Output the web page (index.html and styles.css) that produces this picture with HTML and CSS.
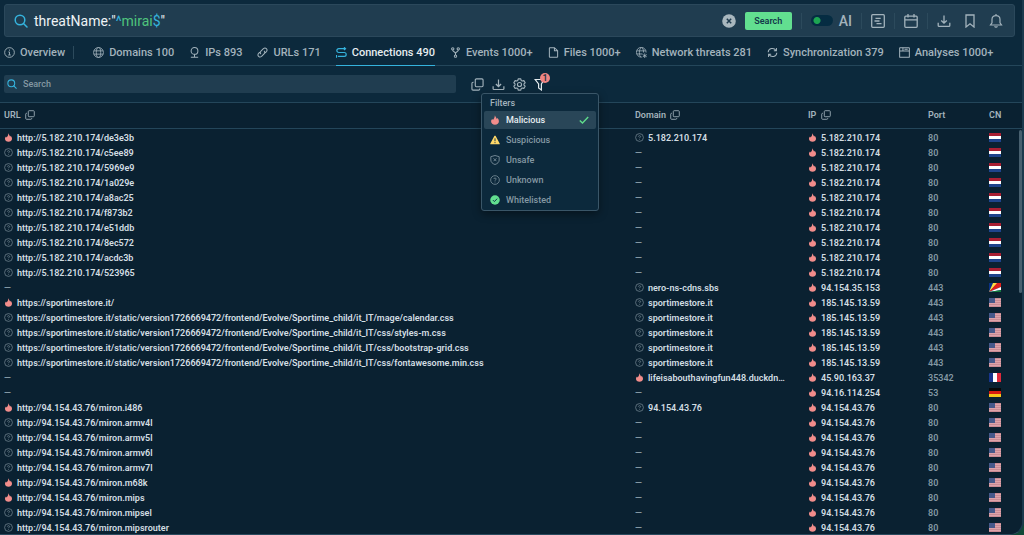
FILE: index.html
```html
<!DOCTYPE html>
<html lang="en">
    <head>
        <meta charset="UTF-8">
        <meta name="viewport" content="width=device-width, initial-scale=1.0">
        <title>Threat lookup</title>
        <link rel="stylesheet" href="styles.css">
    </head>
    <body>
        <!-- icons used more than once -->
        <svg class="sprite" aria-hidden="true">
            <symbol id="icSearch" viewBox="0 0 14 14">
                <circle cx="6" cy="6" r="4.8" fill="none" stroke="currentColor" stroke-width="1.5"/>
                <path d="M9.5 9.5 13 13" stroke="currentColor" stroke-width="1.5" stroke-linecap="round"/>
            </symbol>
            <symbol id="icCopy" viewBox="0 0 14 14">
                <rect x="4.6" y="1" width="8.4" height="8.4" rx="1.2" fill="none" stroke="currentColor" stroke-width="1.2"/>
                <path d="M2.8 4.6H2.2A1.2 1.2 0 0 0 1 5.8v6A1.2 1.2 0 0 0 2.2 13h6a1.2 1.2 0 0 0 1.2-1.2v-.6" fill="none" stroke="currentColor" stroke-width="1.2"/>
            </symbol>
            <symbol id="icDownload" viewBox="0 0 14 14">
                <path d="M7 1.500v7.500M4.200 6.500 7 9.200l2.800-2.700M1.200 8.800v2.700c0 .5.4.9.9.9h9.800c.5 0 .9-.4.9-.9V8.800" fill="none" stroke="currentColor" stroke-width="1.3"/>
            </symbol>
            <symbol id="icFire" viewBox="0 0 10 12">
                <path d="M4.9.4C5.3 2 6.6 3.200 7.100 4.900L8 3.700C9.100 5 9.700 6.200 9.700 7.600 9.700 10.100 7.600 11.700 5 11.700S.3 10.100.3 7.600C.3 6.300.9 5.400 1.700 4.700L2.600 6C3.900 4.600 4.600 2.800 4.900.4Z" fill="#f28d8b"/>
            </symbol>
            <symbol id="icUnknown" viewBox="0 0 12 12">
                <circle cx="6" cy="6" r="5.200" fill="none" stroke="currentColor" stroke-width=".9"/>
                <path d="M4.500 4.800C4.500 3.200 7.500 3.200 7.500 4.800 7.500 5.700 6 5.700 6 6.900M6 7.900v1" fill="none" stroke="currentColor" stroke-width=".9"/>
            </symbol>
            <symbol id="flNL" viewBox="0 0 12 9">
                <path d="M0 0h12v9H0z" fill="#fff"/><path d="M0 0h12v3H0z" fill="#a91f32"/><path d="M0 6h12v3H0z" fill="#1e448c"/>
            </symbol>
            <symbol id="flSC" viewBox="0 0 12 9">
                <path d="M0 0h12v9H0z" fill="#0a3186"/>
                <path d="M0 9 4 0h5z" fill="#fce045"/><path d="M0 9 8 0h4v4z" fill="#e0201c"/>
                <path d="M0 9l12-5v3z" fill="#fff"/><path d="M0 9l12-2v2z" fill="#117a3b"/>
            </symbol>
            <symbol id="flUS" viewBox="0 0 12 9">
                <path d="M0 0h12v9H0z" fill="#dca4ab"/>
                <path d="M0 .5h12M0 2.500h12M0 4.500h12M0 6.500h12M0 8.500h12" stroke="#c98b94"/>
                <path d="M0 0h6v5H0z" fill="#46598b"/>
            </symbol>
            <symbol id="flFR" viewBox="0 0 12 9">
                <path d="M0 0h12v9H0z" fill="#fff"/><path d="M0 0h4v9H0z" fill="#17358c"/><path d="M8 0h4v9H8z" fill="#df2a3c"/>
            </symbol>
            <symbol id="flDE" viewBox="0 0 12 9">
                <path d="M0 0h12v3H0z" fill="#080808"/><path d="M0 3h12v3H0z" fill="#d61a10"/><path d="M0 6h12v3H0z" fill="#f5c51b"/>
            </symbol>
        </svg>

        <main class="window">
            <form class="query-bar">
                <label for="query" class="query-icon" aria-label="Query"><svg class="icon-14"><use href="#icSearch"/></svg></label>
                <div class="query-field">
                    <input type="text" id="query" value='threatName:"^mirai$"' spellcheck="false">
                    <div class="query-colors" aria-hidden="true">threatName:"<span class="anchor">^</span><span class="term">mirai</span><span class="anchor">$</span>"</div>
                </div>
                <button type="reset" class="icon-button" aria-label="Clear">
                    <svg class="icon-14" viewBox="0 0 14 14"><circle cx="7" cy="7" r="6.800" fill="#a9b7be"/><path d="m4.800 4.800 4.400 4.400m0-4.400L4.800 9.200" stroke="#1f3b4e" stroke-width="1.500"/></svg>
                </button>
                <button type="button" class="search-button">Search</button>
                <span class="divider"></span>
                <div class="ai-switch">
                    <input type="checkbox" id="ai">
                    <label for="ai">AI</label>
                </div>
                <span class="divider"></span>
                <button type="button" class="icon-button" aria-label="Query guide">
                    <svg class="icon-14" viewBox="0 0 14 14" fill="none" stroke="currentColor" stroke-width="1.300"><rect x=".7" y=".7" width="12.600" height="12.600" rx="1"/><path d="M4.500 4.300h5.200M3.500 7h5M5.500 9.700h5"/></svg>
                </button>
                <span class="divider"></span>
                <button type="button" class="icon-button" aria-label="Period">
                    <svg class="icon-14" viewBox="0 0 14 14" fill="none" stroke="currentColor" stroke-width="1.300"><rect x=".8" y="2.200" width="12.400" height="11.100" rx="1"/><path d="M1 5.800h12M4 0v3.600M10 0v3.600"/></svg>
                </button>
                <span class="divider"></span>
                <div class="query-actions">
                    <button type="button" class="icon-button" aria-label="Export"><svg class="icon-14"><use href="#icDownload"/></svg></button>
                    <button type="button" class="icon-button" aria-label="Bookmark">
                        <svg class="icon-14" viewBox="0 0 14 14" fill="none" stroke="currentColor" stroke-width="1.300"><path d="M3 1h8v12L7 9.800 3 13z"/></svg>
                    </button>
                    <button type="button" class="icon-button" aria-label="Notifications">
                        <svg class="icon-14" viewBox="0 0 14 14" fill="none" stroke="currentColor" stroke-width="1.200"><path d="M1.500 11h11L11 8.800V5.500C11 3 9.500 1.600 7 1.600S3 3 3 5.500v3.300zM5.600 12.300c.6 1.200 2.200 1.200 2.800 0M7 0v1.500"/></svg>
                    </button>
                </div>
            </form>

            <nav class="tabs">
                <a href="#overview" class="tab">
                    <svg class="icon-11" viewBox="0 0 12 12" fill="none" stroke="currentColor"><circle cx="6" cy="6" r="5.300"/><path d="M6 2.800v1.200M4.800 5.400H6v3.200M4.600 8.700h2.800"/></svg>
                    Overview
                </a>
                <span class="divider"></span>
                <a href="#domains" class="tab">
                    <svg class="icon-11" viewBox="0 0 12 12" fill="none" stroke="currentColor" stroke-width=".9"><circle cx="6" cy="6" r="5.400"/><ellipse cx="6" cy="6" rx="2.400" ry="5.400"/><path d="M1 4.200h10M1 7.800h10"/></svg>
                    Domains 100
                </a>
                <a href="#ips" class="tab">
                    <svg class="icon-11" viewBox="0 0 12 12" fill="none" stroke="currentColor" stroke-width="1.100"><circle cx="6" cy="4.300" r="3.700"/><path d="M6 8v3M2 11.300h8"/></svg>
                    IPs 893
                </a>
                <a href="#urls" class="tab">
                    <svg class="icon-11" viewBox="0 0 12 12" fill="none" stroke="currentColor" stroke-width="1.100"><path d="M4.300 7.700C3 6.300 3.400 5.300 4.300 4.400L7 1.700C9.300-.2 12.200 2.600 10.300 5L8.800 6.500M7.700 4.300C9 5.700 8.600 6.700 7.700 7.600L5 10.300C2.700 12.200-.2 9.400 1.700 7L3.200 5.500"/></svg>
                    URLs 171
                </a>
                <a href="#connections" class="tab active">
                    <svg class="icon-11" viewBox="0 0 12 12" fill="none" stroke="#35b3dd" stroke-width="1.300"><path d="M10 1.800H3a2.100 2.100 0 0 0 0 4.200h6a2.100 2.100 0 0 1 0 4.200H2M8.700.3l1.700 1.500-1.700 1.500M.5 8.600v3.200"/></svg>
                    Connections 490
                </a>
                <a href="#events" class="tab">
                    <svg class="icon-11" viewBox="0 0 12 12" fill="none" stroke="currentColor" stroke-width="1.100"><circle cx="3" cy="2" r="1.300"/><circle cx="9" cy="2" r="1.300"/><circle cx="6" cy="10" r="1.300"/><path d="M3 3.300c0 2.200 3 1.500 3 4v1.400M9 3.300c0 2.200-3 1.500-3 4"/></svg>
                    Events 1000+
                </a>
                <a href="#files" class="tab">
                    <svg class="icon-11" viewBox="0 0 12 12" fill="none" stroke="currentColor" stroke-width="1.100"><path d="M7 .7H2.200c-.4 0-.7.300-.7.700v9.200c0 .4.300.7.700.7h7.600c.4 0 .7-.3.7-.7V4zM7 .7V4h3.500"/></svg>
                    Files 1000+
                </a>
                <a href="#threats" class="tab">
                    <svg class="icon-11" viewBox="0 0 12 12" fill="none" stroke="currentColor" stroke-width=".9"><path d="M11 6A5.300 5.300 0 1 0 6 11M3.700 6c0-7 4.600-7 4.600 0M3.700 6c0 2.500.6 5 2.300 5M1 4.200h9.600M1 7.600h6M9.500 7v5M7.300 8.300l4.400 2.400M11.700 8.300l-4.400 2.400"/></svg>
                    Network threats 281
                </a>
                <a href="#sync" class="tab">
                    <svg class="icon-11" viewBox="0 0 12 12" fill="none" stroke="currentColor" stroke-width="1.100"><path d="M1.300 5.800C1.500 1.300 7.500.2 9.800 3.800M10.300 1v3H7.500M10.700 6.200C10.500 10.700 4.500 11.800 2.200 8.200M1.700 11V8h2.800"/></svg>
                    Synchronization 379
                </a>
                <a href="#analyses" class="tab">
                    <svg class="icon-11" viewBox="0 0 12 12" fill="none" stroke="currentColor" stroke-width="1.100"><rect x=".7" y=".7" width="10.600" height="10.600" rx=".5"/><path d="M.7 4.300h10.600M4.300.7v3.600M6 2.500h3.500"/></svg>
                    Analyses 1000+
                </a>
            </nav>

            <div class="toolbar">
                <div class="table-search">
                    <label for="tableSearch" aria-label="Search in table"><svg class="icon-10"><use href="#icSearch"/></svg></label>
                    <input type="text" id="tableSearch" placeholder="Search">
                </div>
                <div class="tools">
                    <button type="button" class="icon-button" aria-label="Copy"><svg class="icon-13"><use href="#icCopy"/></svg></button>
                    <button type="button" class="icon-button" aria-label="Download"><svg class="icon-13"><use href="#icDownload"/></svg></button>
                    <button type="button" class="icon-button" aria-label="Settings">
                        <svg class="icon-13" viewBox="0 0 14 14" fill="none" stroke="currentColor" stroke-width="1.200"><path d="M5.600.9h2.800l.4 1.700 1.200.7 1.700-.5 1.400 2.400-1.300 1.200v1.200l1.300 1.200-1.400 2.400-1.700-.5-1.200.7-.4 1.700H5.600l-.4-1.700-1.200-.7-1.700.5L.9 8.800l1.300-1.200V6.400L.9 5.200l1.400-2.400 1.700.5 1.200-.7z" stroke-linejoin="round"/><circle cx="7" cy="7" r="2.200"/></svg>
                    </button>
                    <div class="filter">
                        <button type="button" class="icon-button filter-button" aria-label="Filters" aria-expanded="true">
                            <svg class="icon-13" viewBox="0 0 13 13" fill="none" stroke="currentColor" stroke-width="1.200"><path d="M1.200 1.500h9L7.400 6v6L4.600 10V6z"/></svg>
                            <span class="badge">1</span>
                        </button>
                        <div class="filter-menu">
                            <p class="filter-title">Filters</p>
                            <button type="button" class="filter-item selected">
                                <svg class="icon-10"><use href="#icFire"/></svg>
                                <span>Malicious</span>
                                <svg class="icon-10 check" viewBox="0 0 10 10"><path d="m.8 5.400 2.700 2.700 5.700-6" fill="none" stroke="#5fdc8c" stroke-width="1.400"/></svg>
                            </button>
                            <button type="button" class="filter-item">
                                <svg class="icon-10" viewBox="0 0 12 12"><path d="M6 .8c.4 0 .6.2.8.5l4.800 8.800c.3.6 0 1.100-.6 1.100H1c-.6 0-.9-.5-.6-1.100l4.800-8.800C5.400 1 5.600.8 6 .8Z" fill="#ffd868"/><path d="M6 4v3.500M6 8.500v1.300" stroke="#23394a" stroke-width="1.200"/></svg>
                                <span>Suspicious</span>
                            </button>
                            <button type="button" class="filter-item">
                                <svg class="icon-10" viewBox="0 0 12 12" fill="none" stroke="currentColor"><path d="M6 .6 11 2v4c0 2.600-2 4.400-5 5.400C3 10.400 1 8.600 1 6V2z"/><path d="m4.300 4 3.400 3.400m0-3.400L4.300 7.400"/></svg>
                                <span>Unsafe</span>
                            </button>
                            <button type="button" class="filter-item">
                                <svg class="icon-10"><use href="#icUnknown"/></svg>
                                <span>Unknown</span>
                            </button>
                            <button type="button" class="filter-item">
                                <svg class="icon-10" viewBox="0 0 12 12"><circle cx="6" cy="6" r="5.700" fill="#62df90"/><path d="m3.500 6.100 1.800 1.800 3.300-3.500" fill="none" stroke="#12384a" stroke-width="1.200"/></svg>
                                <span>Whitelisted</span>
                            </button>
                        </div>
                    </div>
                </div>
            </div>

            <div class="table-area">
                <table class="connections">
                    <colgroup>
                        <col>
                        <col class="col-domain">
                        <col class="col-ip">
                        <col class="col-port">
                        <col class="col-cn">
                    </colgroup>
                    <thead>
                        <tr>
                            <th>URL <svg class="icon-10"><use href="#icCopy"/></svg></th>
                            <th>Domain <svg class="icon-10"><use href="#icCopy"/></svg></th>
                            <th>IP <svg class="icon-10"><use href="#icCopy"/></svg></th>
                            <th>Port</th>
                            <th>CN</th>
                        </tr>
                    </thead>
                    <tbody id="rows"></tbody>
                </table>
                <div class="scroll-thumb"></div>
            </div>
        </main>
        <script src="script.js"></script>
    </body>
</html>
```

FILE: styles.css
```css
*{
    margin: 0;
    padding: 0;
    box-sizing: border-box;
}
body{
    background: #0f4a38;
    font-family: Roboto, sans-serif;
    font-size: 9px;
    font-weight: 500;
    color: #a3b3bc;
}
button, input{
    font: inherit;
    color: inherit;
    border: 0;
    background: none;
}
svg{
    display: block;
    flex: none;
}
.sprite{
    position: absolute;
    width: 0;
    height: 0;
}
.icon-10{ width: 10px; height: 10px; }
.icon-11{ width: 11px; height: 11px; }
.icon-13{ width: 13px; height: 13px; }
.icon-14{ width: 14px; height: 14px; }
.icon-button{
    display: flex;
    color: #a3b3bc;
}
.divider{
    width: 1px;
    height: 16px;
    background: #2c4a5c;
}
.window{
    display: flex;
    flex-direction: column;
    height: 100vh;
    overflow: hidden;
    background: #0c293c;
    border-right: 2px solid #1b3a4d;
    border-bottom: 1px solid #2b4a5e;
    border-bottom-right-radius: 14px;
}

/* query */
.query-bar{
    display: flex;
    flex: none;
    align-items: center;
    gap: 9px;
    height: 33px;
    margin: 4px 7px 0 4px;
    padding: 0 11px 0 9px;
    background: #203d50;
    border: 1px solid #2b485b;
    border-radius: 3px;
}
.query-icon, .table-search label{
    color: #35b3dd;
}
.query-field{
    display: grid;
    flex: 1;
    margin-left: -3px;
    font-size: 14px;
    font-weight: 400;
    line-height: 20px;
}
.query-field input, .query-colors{
    grid-area: 1 / 1;
    white-space: pre;
}
.query-field input{
    color: transparent;
    caret-color: #fff;
    outline: none;
}
.query-colors{
    color: #eef3f5;
    pointer-events: none;
}
.anchor{ color: #35b3dd; }
.term{ color: #4fc47c; }
.search-button{
    width: 47px;
    height: 18px;
    background: #62df90;
    border-radius: 2px;
    color: #12384a;
    font-size: 9px;
    font-weight: 600;
}
.ai-switch{
    display: flex;
    align-items: center;
    gap: 6px;
    font-size: 14px;
}
.ai-switch input{
    appearance: none;
    width: 22px;
    height: 11px;
    border-radius: 6px;
    background: radial-gradient(circle at 6px 50%, #1da552 3px, #052c42 4px);
}
.query-actions{
    display: flex;
    gap: 12px;
}

/* tabs */
.tabs{
    display: flex;
    flex: none;
    align-items: center;
    gap: 15px;
    height: 29px;
    padding: 0 4px;
    border-bottom: 1px solid #24465a;
    font-size: 11px;
    white-space: nowrap;
}
.tabs .divider{
    height: 13px;
    margin: 3px 4px 0 -7px;
}
.tab{
    display: flex;
    align-items: center;
    gap: 5px;
    height: 28px;
    margin-top: 1px;
    padding-top: 3px;
    border-bottom: 1px solid transparent;
    color: #a3b3bc;
    text-decoration: none;
}
.tab.active{
    color: #e6edf0;
    border-bottom-color: #35b3dd;
}

/* search in table, tools */
.toolbar{
    display: flex;
    flex: none;
    align-items: center;
    gap: 15px;
    height: 36px;
    padding-left: 4px;
}
.table-search{
    display: flex;
    flex: 0 1 452px;
    align-items: center;
    gap: 6px;
    height: 18px;
    padding: 0 3px;
    background: #203d50;
    border-radius: 2px;
}
.table-search input{
    flex: 1;
    outline: none;
}
.table-search input::placeholder{
    color: #8498a3;
}
.tools{
    display: flex;
    gap: 8px;
}
.filter{
    position: relative;
}
.filter-button{
    color: #e6edf0;
}
.badge{
    position: absolute;
    top: -5px;
    left: 6px;
    width: 10px;
    height: 10px;
    border-radius: 50%;
    background: #ef8583;
    color: #16303f;
    font-size: 9px;
    line-height: 10px;
    text-align: center;
}
.filter-menu{
    position: absolute;
    z-index: 1;
    top: 15px;
    left: -53px;
    display: flex;
    flex-direction: column;
    gap: 2px;
    width: 118px;
    padding: 3px 2px 1px;
    background: #0c293c;
    border: 1px solid #3a5668;
    border-radius: 3px;
    box-shadow: 0 3px 8px rgba(0, 0, 0, 0.4);
}
.filter-title{
    padding-left: 6px;
    line-height: 12px;
}
.filter-item{
    display: flex;
    align-items: center;
    gap: 6px;
    height: 18px;
    padding: 0 7px 0 6px;
    border-radius: 2px;
    color: #8498a3;
}
.filter-item.selected{
    background: #294658;
    color: #e6edf0;
}
.check{
    margin-left: auto;
}

/* table */
.table-area{
    position: relative;
    flex: 1;
    min-height: 0;
    overflow: hidden;
    background: #0a2131;
    border-top: 1px solid #24465a;
}
.connections{
    width: 100%;
    table-layout: fixed;
    border-collapse: collapse;
    white-space: nowrap;
}
.col-domain{ width: 173px; }
.col-ip{ width: 120px; }
.col-port{ width: 61px; }
.col-cn{ width: 33px; }
.connections th{
    height: 25px;
    border-bottom: 1px solid #24465a;
    font-weight: 600;
    text-align: left;
}
.connections th svg{
    display: inline-block;
    margin-left: 2px;
    vertical-align: -2px;
}
.connections th:first-child, .connections td:first-child{
    padding-left: 4px;
}
.connections td{
    height: 15px;
    color: #d3dee3;
    font-weight: 600;
}
.connections tbody tr:first-child td{
    height: 17px;
    padding-top: 2px;
}
.cell{
    display: flex;
    align-items: center;
    gap: 4px;
}
.cell svg{
    width: 9px;
    height: 9px;
    color: #7f929d;
}
.connections .muted{
    color: #8498a3;
}
.flag{
    width: 12px;
    height: 9px;
}
.scroll-thumb{
    position: absolute;
    top: 27px;
    right: 0;
    width: 3px;
    height: 163px;
    border-radius: 2px;
    background: #48606f;
}
```

FILE: script.js
```js
// url, url is malicious, domain, domain is malicious, ip, port, country
const css = "https://sportimestore.it/static/version1726669472/frontend/Evolve/Sportime_child/it_IT/"
const rows = []

const first = ["de3e3b", "c5ee89", "5969e9", "1a029e", "a8ac25", "f873b2", "e51ddb", "8ec572", "acdc3b", "523965"]
first.forEach((name, i) => {
    rows.push(["http://5.182.210.174/" + name, i == 0, i == 0 ? "5.182.210.174" : "", false, "5.182.210.174", 80, "NL"])
})

rows.push(["", false, "nero-ns-cdns.sbs", false, "94.154.35.153", 443, "SC"])
rows.push(["https://sportimestore.it/", true, "sportimestore.it", false, "185.145.13.59", 443, "US"])
const styles = ["mage/calendar.css", "css/styles-m.css", "css/bootstrap-grid.css", "css/fontawesome.min.css"]
styles.forEach(name => {
    rows.push([css + name, false, "sportimestore.it", false, "185.145.13.59", 443, "US"])
})
rows.push(["", false, "lifeisabouthavingfun448.duckdn…", true, "45.90.163.37", 35342, "FR"])
rows.push(["", false, "", false, "94.16.114.254", 53, "DE"])

const miron = ["i486", "armv4l", "armv5l", "armv6l", "armv7l", "m68k", "mips", "mipsel", "mipsrouter"]
const bad = ["i486", "m68k", "mips"]
miron.forEach((name, i) => {
    rows.push(["http://94.154.43.76/miron." + name, bad.includes(name), i == 0 ? "94.154.43.76" : "", false, "94.154.43.76", 80, "US"])
})

function cell(text, malicious) {
    if (!text) {
        return '<td class="muted">—</td>'
    }
    const icon = malicious ? "icFire" : "icUnknown"
    return `<td><div class="cell"><svg><use href="#${icon}"/></svg><span>${text}</span></div></td>`
}

document.getElementById("rows").innerHTML = rows.map(r => `
    <tr>
        ${cell(r[0], r[1])}
        ${cell(r[2], r[3])}
        ${cell(r[4], true)}
        <td class="muted">${r[5]}</td>
        <td><svg class="flag" role="img" aria-label="${r[6]}"><use href="#fl${r[6]}"/></svg></td>
    </tr>`).join("")
```
